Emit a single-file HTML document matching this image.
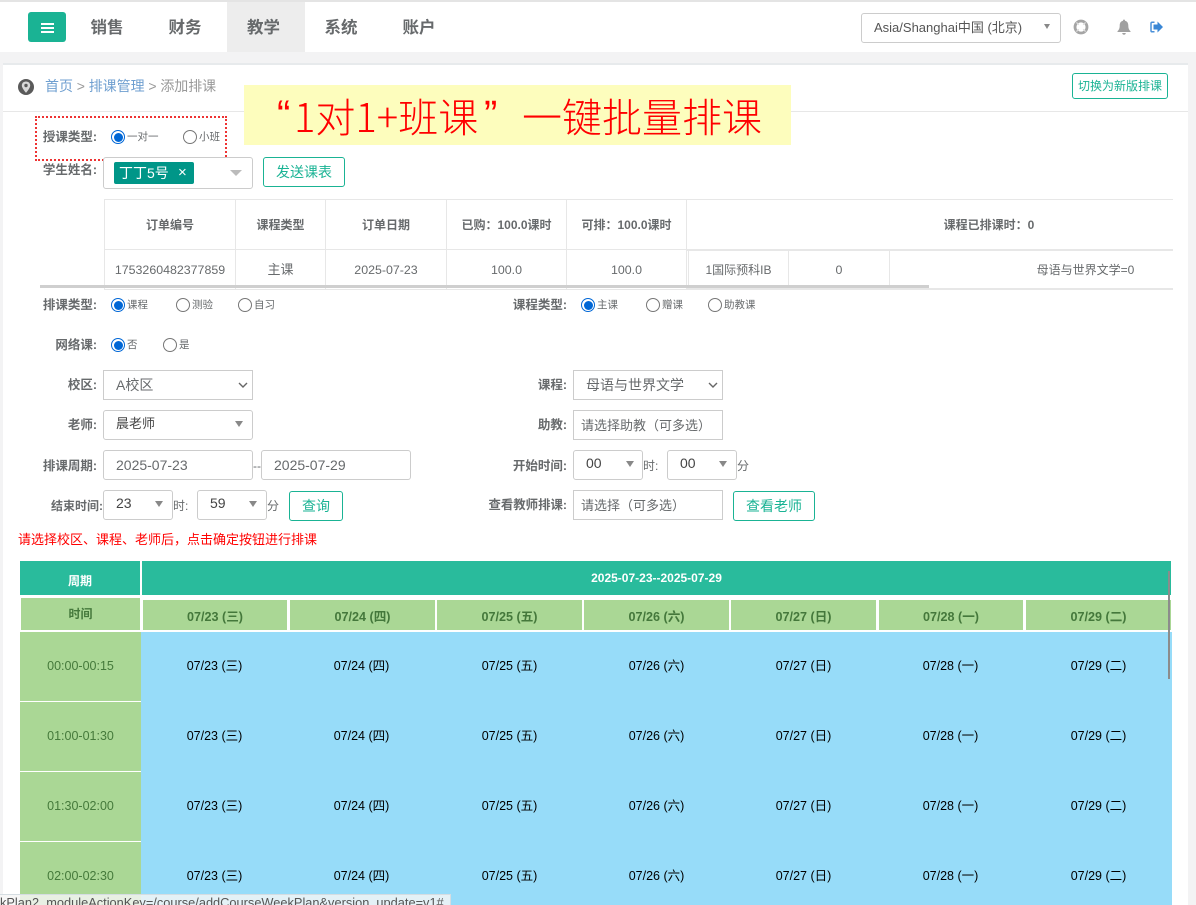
<!DOCTYPE html>
<html lang="zh-CN">
<head>
<meta charset="utf-8">
<style>
html,body{margin:0;padding:0;}
body{position:relative;width:1196px;height:905px;overflow:hidden;background:#f3f3f4;font-family:"Liberation Sans","Noto Sans CJK SC",sans-serif;color:#676a6c;font-size:13px;}
.a{position:absolute;white-space:nowrap;}
.l{position:absolute;white-space:nowrap;font-size:12.5px;font-weight:bold;color:#676a6c;line-height:16px;text-align:right;}
.nav{position:absolute;top:2px;height:50px;line-height:52px;font-size:16.5px;font-weight:bold;color:#676a6c;width:78px;text-align:center;}
.box{position:absolute;box-sizing:border-box;border:1px solid #ccc;background:#fff;border-radius:3px;height:30px;color:#676a6c;line-height:29px;white-space:nowrap;}
.sq{border-radius:0;}
.btn{position:absolute;box-sizing:border-box;border:1px solid #1ab394;background:#fff;border-radius:3px;color:#1ab394;text-align:center;height:30px;line-height:29px;font-size:14px;}
.r{position:absolute;box-sizing:border-box;width:14px;height:14px;border-radius:50%;border:1px solid #767676;background:#fff;}
.r.on{border-color:#0067d6;}
.r.on::after{content:"";position:absolute;left:1.5px;top:1.5px;width:9px;height:9px;border-radius:50%;background:#0067d6;}
.rt{position:absolute;font-size:10.5px;color:#676a6c;line-height:14px;white-space:nowrap;}
.ar{position:absolute;width:0;height:0;border-left:4px solid transparent;border-right:4px solid transparent;border-top:6px solid #888;}
.v{position:absolute;background:#e7e7e7;width:1px;}
.h{position:absolute;background:#e7e7e7;height:1px;}
.th{position:absolute;top:217px;line-height:16px;font-size:12px;font-weight:bold;text-align:center;white-space:nowrap;color:#676a6c;}
.td{position:absolute;top:261px;line-height:18px;font-size:12.4px;text-align:center;white-space:nowrap;color:#676a6c;}
.g{position:absolute;background:#aad795;}
.day{position:absolute;top:600px;height:30px;background:#aad795;color:#44783b;font-weight:bold;font-size:12.6px;line-height:34px;text-align:center;white-space:nowrap;}
.tm{position:absolute;left:20px;width:121px;text-align:center;color:#457a3b;font-size:12.5px;line-height:16px;}
.d{position:absolute;width:147px;text-align:center;color:#000;font-size:12.5px;line-height:16px;white-space:nowrap;}
.bn{position:absolute;top:85px;height:60px;line-height:60px;font-size:40px;color:#f00;white-space:nowrap;font-weight:300;font-family:"Noto Sans CJK SC","Liberation Sans",sans-serif;}
.q{position:absolute;top:85px;height:60px;line-height:60px;font-size:40px;color:#f00;font-family:"Liberation Sans",sans-serif;}
</style>
</head>
<body>
<!-- top nav -->
<div class="a" style="left:0;top:0;width:1196px;height:2px;background:#e4e4e4;"></div>
<div class="a" style="left:0;top:2px;width:1196px;height:50px;background:#fff;"></div>
<div class="a" style="left:28px;top:12px;width:38px;height:30px;background:#1ab394;border-radius:3px;"></div>
<div class="a" style="left:41px;top:23px;width:13px;height:2px;background:#fff;"></div>
<div class="a" style="left:41px;top:27px;width:13px;height:2px;background:#fff;"></div>
<div class="a" style="left:41px;top:31px;width:13px;height:2px;background:#fff;"></div>
<div class="nav" style="left:68px;">销售</div>
<div class="nav" style="left:146px;">财务</div>
<div class="nav" style="left:227px;background:#ededed;text-indent:-5px;">教学</div>
<div class="nav" style="left:302px;">系统</div>
<div class="nav" style="left:380px;">账户</div>

<div class="box" style="left:861px;top:13px;width:200px;font-size:13px;padding-left:12px;color:#555;line-height:27px;">Asia/Shanghai中国 (北京)</div>
<div class="ar" style="left:1044px;top:24px;border-left-width:3.5px;border-right-width:3.5px;border-top-width:5px;"></div>
<svg class="a" style="left:1073px;top:19px;" width="16" height="16" viewBox="0 0 16 16"><circle cx="8" cy="8" r="6" fill="none" stroke="#a5a5a5" stroke-width="2.800"/><path d="M3.400 3.400L5.800 5.800M12.600 3.400L10.200 5.800M3.400 12.600L5.800 10.200M12.600 12.600L10.200 10.200" stroke="#ddd" stroke-width="1.300"/></svg>
<svg class="a" style="left:1117px;top:19px;" width="14" height="16" viewBox="0 0 14 16"><path d="M7 0.500c.7 0 1 .5 1 1.200 2.300.5 3.300 2.300 3.300 4.800 0 3 .8 4.500 2.200 5.800v.7H.5v-.7C1.900 11 2.700 9.500 2.700 6.500c0-2.500 1-4.300 3.300-4.800 0-.7.3-1.200 1-1.200zM5.200 14h3.600c0 1-.8 1.700-1.800 1.700S5.200 15 5.200 14z" fill="#a0a0a0"/></svg>
<svg class="a" style="left:1150px;top:21px;" width="13" height="12" viewBox="0 0 13 12"><path d="M4.500 1.200H2.200Q1 1.200 1 2.400v7.200q0 1.200 1.200 1.200h2.300" fill="none" stroke="#4a90d9" stroke-width="1.500"/><path d="M3.500 3.500H7.500V.5L13 6 7.500 11.500V8.500H3.500z" fill="#3a87d5"/></svg>

<!-- main panel -->
<div class="a" style="left:3px;top:63px;width:1185px;height:842px;background:#fff;"></div>
<div class="a" style="left:3px;top:63px;width:1185px;height:2px;background:#e7eaec;"></div>
<div class="a" style="left:3px;top:111px;width:1185px;height:1px;background:#e7e7e7;"></div>

<!-- breadcrumb -->
<svg class="a" style="left:18px;top:79px;" width="16" height="16" viewBox="0 0 16 16"><circle cx="8" cy="8" r="8" fill="#5a5a5a"/><path d="M8 2.500C5.500 2.500 3.800 4.300 3.800 6.500 3.800 9.200 8 13.800 8 13.800s4.200-4.600 4.200-7.300C12.200 4.300 10.500 2.500 8 2.500z" fill="#d8d8d8"/><circle cx="8" cy="6.500" r="1.700" fill="#5a5a5a"/></svg>
<div class="a" style="left:45px;top:77px;font-size:14px;line-height:18px;color:#999;letter-spacing:-.05px;"><span style="color:#6f9fd0;">首页</span> &gt; <span style="color:#6f9fd0;">排课管理</span> &gt; 添加排课</div>
<div class="btn" style="left:1072px;top:73px;width:96px;height:26px;line-height:24px;font-size:12px;">切换为新版排课</div>

<!-- banner -->
<div class="a" style="left:244px;top:85px;width:547px;height:60px;background:#fdfdbd;"></div>
<span class="q" style="left:277px;">“</span>
<span class="bn" style="left:294px;">1对1+班课</span>
<span class="q" style="left:484px;">”</span>
<span class="bn" style="left:522px;">一键批量排课</span>

<!-- type box -->
<div class="a" style="left:35px;top:116px;width:188px;height:41px;border:2px dotted #e33;"></div>
<div class="l" style="left:30px;top:129px;width:67px;">授课类型:</div>
<div class="r on" style="left:111px;top:130px;"></div><div class="rt" style="left:127px;top:130px;">一对一</div>
<div class="r" style="left:183px;top:130px;"></div><div class="rt" style="left:199px;top:130px;">小班</div>

<div class="l" style="left:30px;top:162px;width:67px;">学生姓名:</div>
<div class="box" style="left:103px;top:157px;width:150px;height:32px;"></div>
<div class="a" style="left:114px;top:162px;width:80px;height:22px;background:#009688;border-radius:2px;color:#fff;font-size:14px;line-height:22px;"><span style="margin-left:5px;">丁丁5号</span><span style="position:absolute;left:64px;top:0;font-size:15px;">×</span></div>
<div class="ar" style="left:230px;top:170px;border-left-width:6px;border-right-width:6px;border-top:6px solid #bbb;"></div>
<div class="btn" style="left:263px;top:157px;width:82px;">发送课表</div>

<!-- order table -->
<div class="h" style="left:104px;top:199px;width:1069px;height:1px;"></div>
<div class="h" style="left:104px;top:249px;width:583px;"></div>
<div class="h" style="left:687px;top:249px;width:486px;height:2px;"></div>
<div class="h" style="left:104px;top:289px;width:583px;"></div>
<div class="h" style="left:687px;top:288px;width:486px;height:2px;"></div>
<div class="v" style="left:104px;top:199px;height:91px;"></div>
<div class="v" style="left:235px;top:199px;height:91px;"></div>
<div class="v" style="left:325px;top:199px;height:91px;"></div>
<div class="v" style="left:446px;top:199px;height:91px;"></div>
<div class="v" style="left:566px;top:199px;height:91px;"></div>
<div class="v" style="left:686px;top:199px;height:91px;"></div>
<div class="v" style="left:688px;top:250px;height:39px;"></div>
<div class="v" style="left:788px;top:250px;height:39px;"></div>
<div class="v" style="left:889px;top:250px;height:39px;"></div>
<div class="th" style="left:105px;width:130px;">订单编号</div>
<div class="th" style="left:236px;width:89px;">课程类型</div>
<div class="th" style="left:326px;width:120px;">订单日期</div>
<div class="th" style="left:447px;width:119px;">已购：100.0课时</div>
<div class="th" style="left:567px;width:119px;">可排：100.0课时</div>
<div class="th" style="left:687px;width:604px;">课程已排课时：0</div>
<div class="td" style="left:105px;width:130px;">1753260482377859</div>
<div class="td" style="left:236px;width:89px;font-size:13px;">主课</div>
<div class="td" style="left:326px;width:120px;">2025-07-23</div>
<div class="td" style="left:447px;width:119px;">100.0</div>
<div class="td" style="left:567px;width:119px;">100.0</div>
<div class="td" style="left:689px;width:99px;font-size:12px;">1国际预科IB</div>
<div class="td" style="left:789px;width:100px;">0</div>
<div class="td" style="left:890px;width:391px;font-size:12px;">母语与世界文学=0</div>
<div class="a" style="left:40px;top:285px;width:889px;height:3px;background:#cfcfcf;"></div>

<!-- radio rows -->
<div class="l" style="left:30px;top:297px;width:67px;">排课类型:</div>
<div class="r on" style="left:111px;top:298px;"></div><div class="rt" style="left:127px;top:298px;">课程</div>
<div class="r" style="left:176px;top:298px;"></div><div class="rt" style="left:192px;top:298px;">测验</div>
<div class="r" style="left:238px;top:298px;"></div><div class="rt" style="left:254px;top:298px;">自习</div>
<div class="l" style="left:500px;top:297px;width:67px;">课程类型:</div>
<div class="r on" style="left:581px;top:298px;"></div><div class="rt" style="left:597px;top:298px;">主课</div>
<div class="r" style="left:646px;top:298px;"></div><div class="rt" style="left:662px;top:298px;">赠课</div>
<div class="r" style="left:708px;top:298px;"></div><div class="rt" style="left:724px;top:298px;">助教课</div>
<div class="l" style="left:30px;top:337px;width:67px;">网络课:</div>
<div class="r on" style="left:111px;top:338px;"></div><div class="rt" style="left:127px;top:338px;">否</div>
<div class="r" style="left:163px;top:338px;"></div><div class="rt" style="left:179px;top:338px;">是</div>

<!-- form -->
<div class="l" style="left:30px;top:377px;width:67px;">校区:</div>
<div class="box sq" style="left:103px;top:370px;width:150px;font-size:14px;padding-left:12px;">A校区</div>
<svg class="a" style="left:238px;top:382px;" width="10" height="7" viewBox="0 0 10 7"><path d="M1 1l4 4 4-4" fill="none" stroke="#666" stroke-width="1.400"/></svg>
<div class="l" style="left:500px;top:377px;width:67px;">课程:</div>
<div class="box sq" style="left:573px;top:370px;width:150px;font-size:14px;padding-left:12px;">母语与世界文学</div>
<svg class="a" style="left:708px;top:382px;" width="10" height="7" viewBox="0 0 10 7"><path d="M1 1l4 4 4-4" fill="none" stroke="#666" stroke-width="1.400"/></svg>

<div class="l" style="left:30px;top:417px;width:67px;">老师:</div>
<div class="box" style="left:103px;top:410px;width:150px;padding-left:12px;line-height:25px;color:#444;">晨老师</div>
<div class="ar" style="left:235px;top:421px;"></div>
<div class="l" style="left:500px;top:417px;width:67px;">助教:</div>
<div class="box sq" style="left:573px;top:410px;width:150px;padding-left:7px;line-height:30px;">请选择助教（可多选）</div>

<div class="l" style="left:30px;top:458px;width:67px;">排课周期:</div>
<div class="box" style="left:103px;top:450px;width:150px;font-size:14px;padding-left:12px;">2025-07-23</div>
<div class="a" style="left:253px;top:458px;font-size:12px;line-height:16px;">--</div>
<div class="box" style="left:261px;top:450px;width:150px;font-size:14px;padding-left:12px;">2025-07-29</div>
<div class="l" style="left:500px;top:458px;width:67px;">开始时间:</div>
<div class="box" style="left:573px;top:450px;width:70px;font-size:14px;padding-left:12px;line-height:25px;color:#444;">00</div>
<div class="ar" style="left:626px;top:461px;"></div>
<div class="a" style="left:643px;top:458px;font-size:12px;line-height:16px;">时:</div>
<div class="box" style="left:667px;top:450px;width:70px;font-size:14px;padding-left:12px;line-height:25px;color:#444;">00</div>
<div class="ar" style="left:719px;top:461px;"></div>
<div class="a" style="left:737px;top:458px;font-size:12px;line-height:16px;">分</div>

<div class="l" style="left:30px;top:498px;width:73px;font-size:12px;">结束时间:</div>
<div class="box" style="left:103px;top:490px;width:70px;font-size:14px;padding-left:12px;line-height:25px;color:#444;">23</div>
<div class="ar" style="left:155px;top:501px;"></div>
<div class="a" style="left:173px;top:498px;font-size:12px;line-height:16px;">时:</div>
<div class="box" style="left:197px;top:490px;width:70px;font-size:14px;padding-left:12px;line-height:25px;color:#444;">59</div>
<div class="ar" style="left:249px;top:501px;"></div>
<div class="a" style="left:267px;top:498px;font-size:12px;line-height:16px;">分</div>
<div class="btn" style="left:289px;top:491px;width:54px;">查询</div>
<div class="l" style="left:470px;top:497px;width:97px;font-size:12.4px;">查看教师排课:</div>
<div class="box sq" style="left:573px;top:490px;width:150px;padding-left:7px;line-height:30px;">请选择（可多选）</div>
<div class="btn" style="left:733px;top:491px;width:82px;">查看老师</div>

<div class="a" style="left:18px;top:531px;color:#f00;font-size:13px;line-height:18px;">请选择校区、课程、老师后，点击确定按钮进行排课</div>

<!-- schedule -->
<div class="a" style="left:20px;top:561px;width:120px;height:34px;background:#29bb9c;color:#fff;font-weight:bold;font-size:12px;line-height:41px;text-align:center;">周期</div>
<div class="a" style="left:142px;top:561px;width:1029px;height:34px;background:#29bb9c;color:#fff;font-weight:bold;font-size:12px;line-height:35px;text-align:center;">2025-07-23--2025-07-29</div>
<div class="a" style="left:21px;top:598px;width:119px;height:32px;background:#aad795;color:#44783b;font-weight:bold;font-size:12px;line-height:33px;text-align:center;">时间</div>
<div class="day" style="left:143px;width:144px;">07/23 (三)</div>
<div class="day" style="left:290px;width:145px;">07/24 (四)</div>
<div class="day" style="left:437px;width:145px;">07/25 (五)</div>
<div class="day" style="left:584px;width:145px;">07/26 (六)</div>
<div class="day" style="left:731px;width:145px;">07/27 (日)</div>
<div class="day" style="left:879px;width:144px;">07/28 (一)</div>
<div class="day" style="left:1026px;width:145px;">07/29 (二)</div>

<div class="a" style="left:141px;top:632px;width:1031px;height:273px;background:#97dcf9;"></div>
<div class="g" style="left:20px;top:632px;width:121px;height:273px;"></div>
<div class="a" style="left:20px;top:701px;width:121px;height:1px;background:#fff;"></div>
<div class="a" style="left:20px;top:771px;width:121px;height:1px;background:#fff;"></div>
<div class="a" style="left:20px;top:841px;width:121px;height:1px;background:#fff;"></div>

<div class="tm" style="top:658px;">00:00-00:15</div>
<div class="tm" style="top:728px;">01:00-01:30</div>
<div class="tm" style="top:798px;">01:30-02:00</div>
<div class="tm" style="top:868px;">02:00-02:30</div>

<div class="d" style="left:141px;top:658px;">07/23 (三)</div><div class="d" style="left:288px;top:658px;">07/24 (四)</div><div class="d" style="left:436px;top:658px;">07/25 (五)</div><div class="d" style="left:583px;top:658px;">07/26 (六)</div><div class="d" style="left:730px;top:658px;">07/27 (日)</div><div class="d" style="left:877px;top:658px;">07/28 (一)</div><div class="d" style="left:1025px;top:658px;">07/29 (二)</div>
<div class="d" style="left:141px;top:728px;">07/23 (三)</div><div class="d" style="left:288px;top:728px;">07/24 (四)</div><div class="d" style="left:436px;top:728px;">07/25 (五)</div><div class="d" style="left:583px;top:728px;">07/26 (六)</div><div class="d" style="left:730px;top:728px;">07/27 (日)</div><div class="d" style="left:877px;top:728px;">07/28 (一)</div><div class="d" style="left:1025px;top:728px;">07/29 (二)</div>
<div class="d" style="left:141px;top:798px;">07/23 (三)</div><div class="d" style="left:288px;top:798px;">07/24 (四)</div><div class="d" style="left:436px;top:798px;">07/25 (五)</div><div class="d" style="left:583px;top:798px;">07/26 (六)</div><div class="d" style="left:730px;top:798px;">07/27 (日)</div><div class="d" style="left:877px;top:798px;">07/28 (一)</div><div class="d" style="left:1025px;top:798px;">07/29 (二)</div>
<div class="d" style="left:141px;top:868px;">07/23 (三)</div><div class="d" style="left:288px;top:868px;">07/24 (四)</div><div class="d" style="left:436px;top:868px;">07/25 (五)</div><div class="d" style="left:583px;top:868px;">07/26 (六)</div><div class="d" style="left:730px;top:868px;">07/27 (日)</div><div class="d" style="left:877px;top:868px;">07/28 (一)</div><div class="d" style="left:1025px;top:868px;">07/29 (二)</div>

<div class="a" style="left:1168px;top:571px;width:2px;height:108px;background:#8c8c8c;"></div>

<!-- status bar -->
<div class="a" style="left:0;top:894px;width:451px;height:11px;box-sizing:border-box;border-top:1px solid #d5dde2;border-right:1px solid #d5dde2;background:rgba(245,245,245,.82);overflow:hidden;font-size:12.8px;line-height:15px;color:#555;"><span style="position:absolute;left:0;top:0;">kPlan2_moduleActionKey=/course/addCourseWeekPlan&amp;version_update=v1#</span></div>
</body>
</html>
